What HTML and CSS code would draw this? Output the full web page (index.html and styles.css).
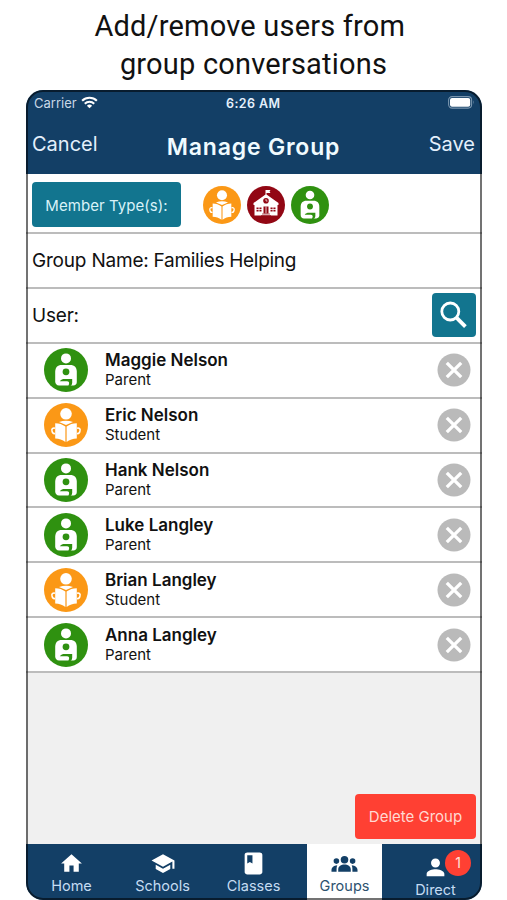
FILE: index.html
```html
<!DOCTYPE html>
<html lang="en">
<head>
<meta charset="utf-8">
<title>Manage Group</title>
<link rel="stylesheet" href="styles.css">
</head>
<body>
<svg class="defs" aria-hidden="true">
  <symbol id="parent" viewBox="0 0 44 44">
    <circle cx="22" cy="22" r="22" fill="#2f9110"/>
    <circle cx="22" cy="10.400" r="5" fill="#fff"/>
    <path d="M11.200 33.500V24c0-4.500 2.300-7 6.600-7h8.400c4.300 0 6.600 2.500 6.600 7v10c0 2-1.500 3.500-3.500 3.500H15c-2.300 0-3.800-1.700-3.800-4z" fill="#fff"/>
    <circle cx="22" cy="23.800" r="3.400" fill="#2f9110"/>
    <path d="M15.800 33.200c1.200-1.700 2.800-2.300 5-2.300h7.400v3.800c0 2.200-1.400 3.600-4 3.800l.8-2.500c.5-1.700-.3-2.800-2-2.800z" fill="#2f9110"/>
  </symbol>
  <symbol id="student" viewBox="0 0 44 44">
    <circle cx="22" cy="22" r="22" fill="#fb9816"/>
    <circle cx="22" cy="10.800" r="5.800" fill="#fff"/>
    <path d="M15 19q7-2.500 14 0l-7 3z" fill="#fff"/>
    <path d="M11.200 20.200c4 .1 7.300 1.100 10.200 3.400v15.500c-3-2.200-6.200-3.300-10.200-3.500zM32.800 20.200c-4 .1-7.300 1.100-10.200 3.400v15.500c3-2.200 6.200-3.300 10.200-3.500z" fill="#fff"/>
    <path d="M11 25.200c-2.300-.6-3.600.9-3 2.700.2 1.700 1.200 2.900 3 2.700M33 25.200c2.300-.6 3.600.9 3 2.700-.2 1.700-1.200 2.900-3 2.700" fill="none" stroke="#fff" stroke-width="1.500"/>
  </symbol>
  <symbol id="school" viewBox="0 0 38 38">
    <circle cx="19" cy="19" r="19" fill="#920714"/>
    <path d="M18.500 4h1v4.500L31.500 17v2h-25v-2l12-8.500zM19.500 4h4l-1 1.500 1 1.500h-4z" fill="#fff"/>
    <path d="M7.500 18.500h23V29.500h-23z" fill="#fff"/>
    <circle cx="19" cy="14.800" r="2.800" fill="#920714"/>
    <path d="M19 13v2h1.500" stroke="#fff" stroke-width=".7" fill="none"/>
    <path d="M9.500 21.500h5v4h-5zM23.500 21.500h5v4h-5zM16.500 20.500h5v7h-5z" fill="#920714"/>
    <path d="M12 21v5M26 21v5M9 23.500h6M23 23.500h6M19 20.500v7" stroke="#fff" stroke-width=".8"/>
    <path d="M15 28h8M14 29.600h10" stroke="#920714" stroke-width=".7"/>
  </symbol>
  <symbol id="remove" viewBox="0 0 34 34">
    <circle cx="17" cy="17" r="16.500" fill="#bababa"/>
    <path d="M9.800 9.800l14.400 14.400M24.200 9.800L9.800 24.200" stroke="#fff" stroke-width="3.300"/>
  </symbol>
</svg>

<h1 class="caption">Add/remove users from&nbsp;<br>group conversations</h1>

<main class="phone">
  <header class="top">
    <div class="status">
      <span class="carrier">Carrier</span>
      <svg class="wifi" viewBox="0 0 18 13"><path d="M1.200 4.700a11.200 11.200 0 0 1 15.600 0M4 7.700a7.200 7.200 0 0 1 10 0" fill="none" stroke="#fff" stroke-width="2.200"/><path d="M9 12.500L6.200 9.900a4 4 0 0 1 5.600 0z" fill="#fff"/></svg>
      <span class="time">6:26 AM</span>
      <svg class="battery" viewBox="0 0 27 13"><rect x=".6" y=".6" width="23" height="11.500" rx="3.500" fill="none" stroke="#7995ae" stroke-width="1.100"/><rect x="2" y="2" width="20.200" height="8.700" rx="2" fill="#fff"/><path d="M25 4.200v4.200q1.500-2.100 0-4.200z" fill="#7995ae"/></svg>
    </div>
    <div class="titlebar">
      <span class="cancel">Cancel</span>
      <h2 class="title">Manage Group</h2>
      <span class="save">Save</span>
    </div>
  </header>

  <section class="row types">
    <button class="member-types">Member Type(s):</button>
    <div class="type-icons">
      <svg><use href="#student"/></svg>
      <svg><use href="#school"/></svg>
      <svg><use href="#parent"/></svg>
    </div>
  </section>
  <section class="row field"><span class="label">Group Name:</span><span class="value">Families Helping</span></section>
  <section class="row field"><span class="user-label">User:</span>
    <button class="search"><svg viewBox="0 0 44 44"><circle cx="18.300" cy="18.500" r="8.500" fill="none" stroke="#fff" stroke-width="2.800"/><path d="M24.700 24.900l8.700 8.700" stroke="#fff" stroke-width="3.800"/></svg></button>
  </section>

  <ul class="members">
    <li class="row"><svg class="avatar"><use href="#parent"/></svg><div class="who"><b>Maggie Nelson</b><span>Parent</span></div><svg class="remove"><use href="#remove"/></svg></li>
    <li class="row"><svg class="avatar"><use href="#student"/></svg><div class="who"><b>Eric Nelson</b><span>Student</span></div><svg class="remove"><use href="#remove"/></svg></li>
    <li class="row"><svg class="avatar"><use href="#parent"/></svg><div class="who"><b>Hank Nelson</b><span>Parent</span></div><svg class="remove"><use href="#remove"/></svg></li>
    <li class="row"><svg class="avatar"><use href="#parent"/></svg><div class="who"><b>Luke Langley</b><span>Parent</span></div><svg class="remove"><use href="#remove"/></svg></li>
    <li class="row"><svg class="avatar"><use href="#student"/></svg><div class="who"><b>Brian Langley</b><span>Student</span></div><svg class="remove"><use href="#remove"/></svg></li>
    <li class="row"><svg class="avatar"><use href="#parent"/></svg><div class="who"><b>Anna Langley</b><span>Parent</span></div><svg class="remove"><use href="#remove"/></svg></li>
  </ul>

  <div class="actions"><button class="delete">Delete Group</button></div>

  <nav class="tabs">
    <a class="tab"><svg viewBox="0 0 24 24"><path d="M10 20v-6h4v6h5v-8h3L12 3 2 12h3v8z"/></svg><span>Home</span></a>
    <a class="tab"><svg class="cap" viewBox="0 0 24 24"><path d="M5 13.180v4L12 21l7-3.820v-4L12 17l-7-3.820zM12 3L1 9l11 6 9-4.910V17h2V9L12 3z"/></svg><span>Schools</span></a>
    <a class="tab book"><svg viewBox="0 0 24 24"><path d="M18 1.500H6c-1.100 0-2.500.9-2.500 2v17c0 1.100 1.400 2 2.500 2h12c1.100 0 2.500-.9 2.500-2v-17c0-1.100-1.400-2-2.500-2zM6 4h5v8l-2.500-1.500L6 12V4z"/></svg><span>Classes</span></a>
    <a class="tab groups active"><svg viewBox="0 0 28 18"><circle cx="14" cy="4.700" r="3.900"/><circle cx="5.600" cy="6" r="2.900"/><circle cx="22.400" cy="6" r="2.900"/><path d="M7.500 17v-2.500c0-3.200 3-5 6.500-5s6.500 1.800 6.500 5V17zM.5 17v-2c0-2.600 2.200-4.400 6-4.800C5.800 12 5.800 13 5.800 17zM27.500 17v-2c0-2.600-2.200-4.400-6-4.800.7 1.800.7 2.800.7 6.800z"/></svg><span>Groups</span></a>
    <a class="tab direct"><svg viewBox="0 0 24 24"><path d="M12 12c2.400 0 4.300-1.900 4.300-4.300s-1.900-4.300-4.300-4.300-4.300 1.900-4.300 4.300 1.900 4.300 4.300 4.300zm0 1.600c-2.670 0-8.500 1.340-8.500 4.400v2.500h17V18c0-3.060-5.830-4.400-8.500-4.400z"/></svg><span>Direct</span><i class="badge">1</i></a>
  </nav>
</main>
</body>
</html>
```
FILE: styles.css
```css
* { box-sizing: border-box; }
body { margin: 0; width: 507px; height: 900px; overflow: hidden; background: #fff; color: #111; font-family: Inter, "Liberation Sans", sans-serif; }
svg { display: block; flex: none; }
button { border: 0; padding: 0; font: inherit; color: #d9f2f8; }
h1, h2, ul { margin: 0; padding: 0; font-weight: 400; }
.defs { display: none; }

.caption { height: 90px; padding-top: 7px; text-align: center; font: 400 29px/38px Roboto, sans-serif; letter-spacing: .2px; }

.phone { position: relative; display: flex; flex-direction: column; width: 456px; height: 810px; margin-left: 26px; border-radius: 17px; overflow: hidden; background: #f0f0f0; }
.phone::after { content: ""; position: absolute; inset: 0; border: 2px solid rgba(0, 0, 0, .55); border-radius: 17px; pointer-events: none; }

.top { height: 84px; flex: none; background: #133f66; color: #e4f0fc; }
.status { display: grid; grid-template-columns: 47px 145px 1fr auto; align-items: center; height: 25px; padding: 0 7px 0 8px; font-size: 13px; }
.carrier { letter-spacing: 0; color: #c9d8e7; }
.wifi { width: 17px; height: 13px; margin-top: -1px; }
.time { padding-top: 1px; font-weight: 600; font-size: 12.500px; letter-spacing: .4px; }
.battery { width: 27px; height: 13px; }
.titlebar { display: grid; grid-template-columns: 1fr auto 1fr; height: 59px; padding: 0 7px 0 6px; line-height: 58px; font-size: 20px; }
.title { padding-top: 3px; font-size: 23px; font-weight: 600; letter-spacing: .8px; color: #f0fbff; }
.save { text-align: right; }

.row { display: flex; align-items: center; height: 54.900px; border-bottom: 2px solid #bcbcbc; background: #fff; }
.types { flex: none; height: 60px; padding-left: 6px; }
.member-types { width: 149px; height: 45px; padding-top: 2px; margin-top: 3px; border-radius: 4px; background: #12758f; font-size: 15px; letter-spacing: .05px; }
.type-icons { display: flex; gap: 6px; margin: 3px 0 0 22px; }
.type-icons svg { width: 38px; height: 38px; }
.field { flex: none; justify-content: space-between; padding: 0 6px; font-size: 19px; letter-spacing: -.2px; }
.value { flex: 1; margin-left: 5px; letter-spacing: -.3px; }
.search { width: 44px; height: 44px; border-radius: 4px; background: #12758f; }
.members { flex: none; list-style: none; }
.members .row { padding: 0 11px 0 18px; }
.avatar { width: 44px; height: 44px; }
.who { display: flex; flex: 1; flex-direction: column; margin-left: 17px; }
.who b { font-size: 17px; font-weight: 600; line-height: 21px; }
.who span { margin-bottom: 1px; font-size: 15px; line-height: 18px; }
.remove { width: 34px; height: 34px; }

.actions { display: flex; flex: 1; align-items: flex-end; justify-content: flex-end; padding: 0 6px 5px; }
.delete { width: 121px; height: 45px; border-radius: 4px; background: #ff4033; color: #ffd9d2; font-size: 15px; letter-spacing: 0; }

.tabs { display: grid; grid-template-columns: 91px 91px 99px 75px 100px; flex: none; height: 56px; background: #133f66; color: #c5dcf3; }
.tab { position: relative; display: flex; flex-direction: column; align-items: center; padding-top: 7px; font-size: 14.500px; line-height: 18px; }
.tab svg { width: 25px; height: 25px; margin-bottom: 1px; fill: #fff; }
.tab .cap { width: 26px; }
.book { padding-right: 8px; }
.active { background: #fff; color: #2d526f; }
.active svg { width: 27px; height: 18px; margin: 4px 0 4px; fill: #133f66; }
.direct { padding: 11px 0 0 7px; }
.badge { position: absolute; top: 6px; right: 11px; width: 26px; height: 26px; border-radius: 50%; background: #ff4033; color: #ffe3dd; font-style: normal; font-size: 14px; line-height: 26px; text-align: center; }
```
